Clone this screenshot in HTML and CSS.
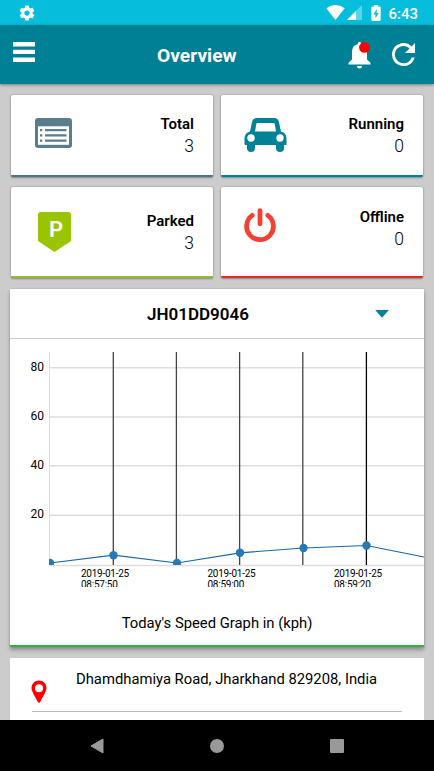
FILE: index.html
```
<!DOCTYPE html>
<html lang="en">
<head>
    <meta charset="utf-8">
    <title>Overview</title>
    <link rel="stylesheet" href="styles.css">
</head>
<body>
    <div class="status-bar">
        <svg class="status-gear" width="18" height="18" viewBox="0 0 24 24"><path fill="#fff" d="M19.43 12.98c.04-.32.07-.64.07-.98s-.03-.66-.07-.98l2.11-1.65c.19-.15.24-.42.12-.64l-2-3.46c-.12-.22-.39-.3-.61-.22l-2.49 1c-.52-.4-1.08-.73-1.69-.98l-.38-2.65A.49.49 0 0 0 14 2h-4c-.25 0-.46.18-.49.42l-.38 2.65c-.61.25-1.17.59-1.69.98l-2.49-1c-.23-.09-.49 0-.61.22l-2 3.46c-.13.22-.07.49.12.64l2.11 1.65c-.04.32-.07.65-.07.98s.03.66.07.98l-2.11 1.65c-.19.15-.24.42-.12.64l2 3.46c.12.22.39.3.61.22l2.49-1c.52.4 1.08.73 1.69.98l.38 2.65c.03.24.24.42.49.42h4c.25 0 .46-.18.49-.42l.38-2.65c.61-.25 1.17-.59 1.69-.98l2.49 1c.23.09.49 0 .61-.22l2-3.46c.12-.22.07-.49-.12-.64l-2.11-1.65zM12 15.5a3.5 3.5 0 1 1 0-7 3.5 3.5 0 0 1 0 7z"/></svg>
        <div class="status-icons">
            <svg width="19" height="15" viewBox="0 0 19 15"><path fill="#fff" d="M9.500 15 L.3 3.300 Q9.500 -3.300 18.700 3.300z"/></svg>
            <svg width="15" height="15" viewBox="0 0 15 15"><path fill="#fff" opacity=".35" d="M0 15 15 0v15z"/><path fill="#fff" d="M0 15 9 6v9z"/></svg>
            <svg class="battery" width="10" height="16" viewBox="0 0 10 16"><path fill="#fff" d="M3 0h4v1.600h1.500q1.200 0 1.200 1.200v12q0 1.200-1.200 1.200h-7Q.3 16 .3 14.800v-12q0-1.200 1.200-1.200H3z"/><path fill="#06bddb" d="M5.700 4 2.500 9.400h2V13.500l3.200-5.600h-2z"/></svg>
            <span class="clock">6:43</span>
        </div>
    </div>

    <header class="toolbar">
        <svg class="menu" width="22" height="20" viewBox="0 0 22 20"><path fill="#fff" d="M0 0h22v4.500H0zM0 7.700h22v4.400H0zM0 15.400h22v4.500H0z"/></svg>
        <h1>Overview</h1>
        <svg class="bell" width="23" height="27" viewBox="0 0 23 27"><path fill="#fff" d="M11.500 0q1.800 0 1.900 2.200C17.300 3.100 19 6 19 10.500v7l3.500 3.300v1.700H.5v-1.700L4 17.500v-7C4 6 5.700 3.100 9.600 2.200 9.700.0 11.500 0 11.500 0zM8.800 24h5.400q-.4 2.500-2.700 2.500T8.800 24z"/><circle cx="16.400" cy="5.400" r="5.300" fill="#f00"/></svg>
        <svg class="refresh" width="23" height="23" viewBox="4 4 16 16"><path fill="#fff" d="M17.650 6.350A7.958 7.958 0 0 0 12 4c-4.420 0-7.990 3.580-7.990 8s3.570 8 7.990 8c3.730 0 6.840-2.550 7.730-6h-2.080A5.990 5.990 0 0 1 12 18c-3.310 0-6-2.690-6-6s2.690-6 6-6c1.660 0 3.140.69 4.220 1.780L13 11h7V4l-2.350 2.350z"/></svg>
    </header>

    <main class="content">
        <div class="cards">
            <div class="card total">
                <svg width="37" height="30" viewBox="0 0 37 30"><rect width="37" height="30" rx="3" fill="#5b7d8b"/><path fill="#fff" d="M3 8.300h31v18.500H3z"/><path fill="#5b7d8b" d="M5 11h2.300v2.300H5zM10 11h21.500v2.300H10zM5 16.200h2.300v2.300H5zM10 16.200h21.500v2.300H10zM5 21.400h2.300v2.300H5zM10 21.400h21.500v2.300H10z"/></svg>
                <div class="info"><b>Total</b><span>3</span></div>
            </div>
            <div class="card running">
                <svg width="43" height="34" viewBox="0 0 43 34"><path fill="#008297" fill-rule="evenodd" d="M13 0h17q4 0 5 4l2 9.500q5.500 1.500 5.500 7V26q0 1-1 1H40v3q0 4-4 4t-4-4v-3H11v3q0 4-4 4t-4-4v-3H1.500q-1 0-1-1v-5.500q0-5.500 5.500-7L8 4q1-4 5-4zM13.500 5q-1 0-1.200 1L11 13.500h21L30.700 6q-.2-1-1.200-1z"/><circle cx="7" cy="20" r="3.700" fill="#fff"/><circle cx="36" cy="20" r="3.700" fill="#fff"/></svg>
                <div class="info"><b>Running</b><span>0</span></div>
            </div>
            <div class="card parked">
                <svg width="33" height="40" viewBox="0 0 33 40"><path fill="#9bc400" d="M3 0h27q3 0 3 3v26L16.500 40 0 29V3q0-3 3-3z"/><text class="p-letter" x="11" y="25">P</text></svg>
                <div class="info"><b>Parked</b><span>3</span></div>
            </div>
            <div class="card offline">
                <svg width="32" height="35" viewBox="0 0 32 35"><path fill="none" stroke="#f44131" stroke-width="4.800" stroke-linecap="round" d="M16 2.600v13.200M8.200 7.400a13.400 13.400 0 1 0 15.600 0"/></svg>
                <div class="info"><b>Offline</b><span>0</span></div>
            </div>
        </div>

        <section class="graph">
            <div class="vehicle">
                <span class="number">JH01DD9046</span>
                <svg width="14" height="8" viewBox="0 0 14 8"><path fill="#008297" d="M.2 0h13.600L7 7.700z"/></svg>
            </div>
            <svg class="chart" width="414" height="248" viewBox="0 0 414 248">
                <!-- grid -->
                <g fill="none" stroke="#dedede">
                    <path d="M39.500 13v213"/>
                    <path stroke-width="1.500" d="M39 28.800h375M39 77.900h375M39 126.700h375M39 176.200h375M39 226.400h375"/>
                </g>
                <path stroke="#444" stroke-width="1.300" d="M103.300 13v213M166.400 13v213M229.600 13v213M292.800 13v213"/>
                <path stroke="#000" stroke-width="1.300" d="M356.400 13v213"/>
                <!-- speed -->
                <svg x="39" y="13" width="375" height="213" viewBox="39 13 375 213">
                    <path fill="none" stroke="#1468aa" stroke-width="1.200" d="M40 224 103.500 216.200 167 224 230 213.800 293.500 209 356.500 206.500 414 218"/>
                    <g fill="#2779b5">
                        <circle cx="40" cy="224" r="4.200"/>
                        <circle cx="103.500" cy="216.200" r="4.200"/>
                        <circle cx="167" cy="224" r="4.200"/>
                        <circle cx="230" cy="213.800" r="4.200"/>
                        <circle cx="293.500" cy="209" r="4.200"/>
                        <circle cx="356.500" cy="206.500" r="4.200"/>
                    </g>
                </svg>
                <g class="y-label">
                    <text x="34" y="31.500">80</text>
                    <text x="34" y="80.500">60</text>
                    <text x="34" y="129.500">40</text>
                    <text x="34" y="179">20</text>
                </g>
                <g class="x-label">
                    <text x="71" y="238">2019-01-25</text><text x="71" y="249">08:57:50</text>
                    <text x="197.500" y="238">2019-01-25</text><text x="197.500" y="249">08:59:00</text>
                    <text x="324" y="238">2019-01-25</text><text x="324" y="249">08:59:20</text>
                </g>
            </svg>
            <p class="caption">Today's Speed Graph in (kph)</p>
        </section>

        <section class="location">
            <div class="address">
                <svg width="16" height="24" viewBox="0 0 16 24"><path fill="#f00" fill-rule="evenodd" d="M8 .5c4.200 0 7.500 3.300 7.500 7.500 0 3.500-4 9-6 13.500q-1.500 2.500-3 0C4.500 17 .5 11.500.5 8 .5 3.800 3.800.5 8 .5zm0 3.700a4 4 0 1 0 0 8 4 4 0 0 0 0-8z"/></svg>
                <span>Dhamdhamiya Road, Jharkhand 829208, India</span>
            </div>
        </section>
    </main>

    <nav class="nav-bar">
        <svg width="14" height="16" viewBox="0 0 14 16"><path fill="#999" d="M13 1v14L1 8z" stroke="#999" stroke-linejoin="round"/></svg>
        <svg width="14" height="14" viewBox="0 0 14 14"><circle cx="7" cy="7" r="7" fill="#999"/></svg>
        <svg width="14" height="14" viewBox="0 0 14 14"><rect width="14" height="14" rx="1" fill="#999"/></svg>
    </nav>
</body>
</html>
```
FILE: styles.css
```
* {
    box-sizing: border-box;
}

body {
    margin: 0;
    height: 771px;
    overflow: hidden;
    display: flex;
    flex-direction: column;
    font-family: Roboto, sans-serif;
    color: #000;
    background-color: #ccc;
}

svg {
    display: block;
    flex: none;
}

.status-bar {
    height: 25px;
    flex: none;
    display: flex;
    justify-content: space-between;
    padding: 0 16px 0 18px;
    background-color: #06bddb;
}

.status-gear {
    margin-top: 4px;
}

.status-icons {
    display: flex;
    align-items: flex-start;
    padding-top: 5px;
    gap: 2px;
}

.battery {
    margin-left: 7px;
}

.clock {
    margin-left: 5px;
    font-size: 15px;
    font-weight: 500;
    line-height: 18px;
    color: #fff;
}

.toolbar {
    height: 59px;
    flex: none;
    display: flex;
    align-items: flex-start;
    padding: 17px 19px 0 13px;
    color: #fff;
    background-color: #008094;
    box-shadow: 0 1px 3px rgba(0, 0, 0, .4);
    z-index: 1;
}

.toolbar h1 {
    margin: 2px 0 0 122px;
    font-size: 19.2px;
    font-weight: 700;
    line-height: 24px;
}

.bell {
    margin-left: auto;
}

.refresh {
    margin: 1px 0 0 21px;
}

.content {
    flex: 1;
    overflow: hidden;
    padding: 11px 10px 0;
}

.cards {
    display: grid;
    grid-template-columns: 202px 202px;
    grid-template-rows: 82px 91px;
    gap: 10px 8px;
    padding-left: 1px;
    margin-bottom: 11px;
}

.card {
    display: flex;
    align-items: flex-start;
    justify-content: space-between;
    padding: 23px 19px 0 24px;
    background-color: #fff;
    border-bottom: 2px solid;
    border-radius: 2px;
    box-shadow: 0 0 2px rgba(0, 0, 0, .3), 0 1px 2px rgba(0, 0, 0, .25);
}

.info {
    display: flex;
    flex-direction: column;
    align-items: flex-end;
    margin-top: -4px;
}

.info b {
    font-size: 15px;
    font-weight: 600;
    line-height: 20px;
}

.info span {
    font-size: 17.5px;
    font-weight: 350;
    line-height: 24px;
}

.total {
    border-color: #497587;
}

.running {
    padding-left: 23px;
    border-color: #008297;
}

.parked {
    padding-top: 25px;
    padding-left: 27px;
    border-color: #8fbd2f;
}

.parked .info {
    margin-top: -1px;
}

.offline {
    padding-top: 21px;
    padding-left: 23px;
    border-color: #e52b24;
}

.offline .info {
    margin-top: -1px;
}

.p-letter {
    font-size: 22px;
    font-weight: 600;
    fill: #fff;
}

.graph {
    height: 358px;
    margin-bottom: 11px;
    background-color: #fff;
    border-bottom: 2px solid #2cb534;
    box-shadow: 0 0 1px rgba(0, 0, 0, .25), 0 3px 4px rgba(0, 0, 0, .3);
}

.vehicle {
    height: 50px;
    display: flex;
    align-items: center;
    padding: 1px 35px 0 137px;
    border-bottom: 1px solid #ccc;
}

.vehicle .number {
    width: 228px;
    font-size: 17px;
    font-weight: 600;
}

.y-label {
    font-size: 12px;
    text-anchor: end;
}

.x-label {
    font-size: 10px;
    letter-spacing: -.25px;
}

.caption {
    margin: 26px 0 0;
    font-size: 14.8px;
    line-height: 20px;
    text-align: center;
}

.location {
    height: 100px;
    padding: 0 22px;
    background-color: #fff;
}

.address {
    height: 54px;
    display: flex;
    align-items: flex-start;
    padding-top: 12px;
    border-bottom: 1px solid #bbb;
}

.address svg {
    margin: 10px 28px 0 -1px;
}

.address span {
    padding-left: 1px;
    font-size: 14.8px;
    line-height: 19px;
    white-space: nowrap;
}

.nav-bar {
    height: 51px;
    flex: none;
    display: flex;
    align-items: center;
    justify-content: center;
    gap: 106px;
    background-color: #000;
}
```
